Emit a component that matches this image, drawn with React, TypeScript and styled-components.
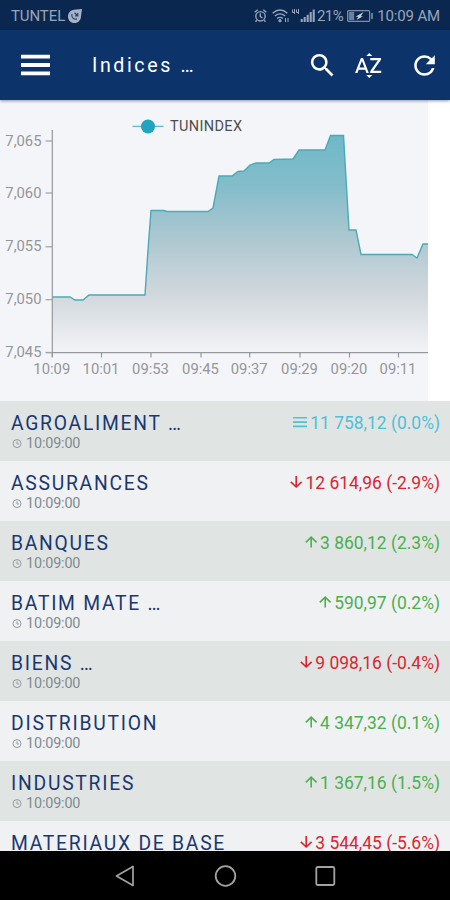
import React from "react";
import styled, { createGlobalStyle } from "styled-components";
import { MdSearch, MdSortByAlpha, MdRefresh } from "react-icons/md";

const GlobalStyle = createGlobalStyle`
  * { box-sizing: border-box; }
  body { margin: 0; background: #fff; font-family: Roboto, "Noto Sans", sans-serif; }
  svg { display: block; flex: none; }
`;

const Screen = styled.div`
  width: 450px;
  height: 900px;
  display: flex;
  flex-direction: column;
  overflow: hidden;
  background: #fff;
`;

const StatusBar = styled.div`
  height: 30px;
  flex: none;
  display: flex;
  align-items: center;
  justify-content: space-between;
  padding: 2px 10px 0 11px;
  background: #0a284f;
  color: #98a4bb;
  font-size: 15px;
  line-height: 20px;
`;

const StatusGroup = styled.div`
  display: flex;
  align-items: center;
`;

const Carrier = styled.span`
  letter-spacing: -0.1px;
  margin-right: 2px;
`;

const Percent = styled.span`
  margin: 0 4px 0 1px;
  letter-spacing: -0.5px;
`;

const Clock = styled.span`
  margin-left: 4px;
  letter-spacing: -0.15px;
`;

const AppBar = styled.header`
  height: 70px;
  flex: none;
  display: flex;
  align-items: center;
  padding: 0 10px 0 21px;
  background: #0d346a;
  color: #fff;
  box-shadow: 0 1px 3px rgba(10, 30, 70, 0.45);
  z-index: 1;
`;

const Title = styled.h1`
  flex: 1;
  margin: 1px 0 0 42px;
  font-size: 19.6px;
  line-height: 24px;
  font-weight: 400;
  letter-spacing: 2.6px;
  white-space: nowrap;
`;

const Action = styled.button<{ $gap: number }>`
  display: flex;
  padding: 0;
  margin: 0 0 0 ${(p) => p.$gap}px;
  border: 0;
  background: none;
  color: #fff;
`;

const ChartPanel = styled.section`
  width: 428px;
  height: 301px;
  flex: none;
  background: #f4f5f8;
`;

const ChartText = styled.text<{ $legend?: boolean }>`
  font-family: Roboto, sans-serif;
  font-size: ${(p) => (p.$legend ? 14.5 : 14.8)}px;
  fill: ${(p) => (p.$legend ? "#4c4d50" : "#94969a")};
`;

const List = styled.ul`
  flex: 1;
  min-height: 0;
  overflow: hidden;
  margin: 0;
  padding: 0;
  list-style: none;
`;

const Row = styled.li`
  height: 60px;
  display: flex;
  justify-content: space-between;
  align-items: flex-start;
  padding: 10px 10px 0 11px;
  background: #eff1f3;
  &:nth-child(odd) { background: #e0e5e4; }
`;

const Name = styled.div`
  padding-top: 1px;
  font-size: 19.3px;
  line-height: 23px;
  letter-spacing: 1.75px;
  color: #1b3770;
  white-space: pre;
`;

const Time = styled.div`
  display: flex;
  align-items: center;
  gap: 4px;
  padding-left: 1px;
  font-size: 14.4px;
  line-height: 17px;
  letter-spacing: -0.15px;
  color: #7f8a90;
`;

type Trend = "flat" | "up" | "down";
const trendColor: Record<Trend, string> = { flat: "#4fc0d6", up: "#4caf50", down: "#dc2430" };

const Quote = styled.div<{ $trend: Trend }>`
  display: flex;
  align-items: center;
  gap: 2px;
  padding-top: 1px;
  font-size: 17.45px;
  line-height: 22px;
  white-space: nowrap;
  color: ${(p) => trendColor[p.$trend]};
`;

const NavBar = styled.nav`
  height: 49px;
  flex: none;
  display: grid;
  grid-template-columns: repeat(3, 100px);
  justify-content: center;
  justify-items: center;
  align-items: center;
  background: #000;
`;

const line =
  "52,197 70,197 75,200 83,200 89,195 145,195 148,150 151,110.5 164,110.5 167,111.5 208,111.5 213,108 219,76 232,76 238,71.5 244,71 250,65 256,63 269,63 274,59.5 293,59 299,50 325,50 330.5,35.5 343.5,35.5 349,130 356,130 361,154.5 412,154.5 417,158 423,144 428,144";

const yTicks: [string, number][] = [
  ["7,065", 41], ["7,060", 93], ["7,055", 146.8], ["7,050", 199.7], ["7,045", 252.5],
];
const xTicks: [string, number][] = [
  ["10:09", 52.3], ["10:01", 101.5], ["09:53", 151], ["09:45", 201],
  ["09:37", 249.7], ["09:29", 300], ["09:20", 349.5], ["09:11", 398.5],
];

const rows: { name: string; value: string; trend: Trend }[] = [
  { name: "AGROALIMENT …", value: "11 758,12 (0.0%)", trend: "flat" },
  { name: "ASSURANCES", value: "12 614,96 (-2.9%)", trend: "down" },
  { name: "BANQUES", value: "3 860,12 (2.3%)", trend: "up" },
  { name: "BATIM MATE …", value: "590,97 (0.2%)", trend: "up" },
  { name: "BIENS …", value: "9 098,16 (-0.4%)", trend: "down" },
  { name: "DISTRIBUTION", value: "4 347,32 (0.1%)", trend: "up" },
  { name: "INDUSTRIES", value: "1 367,16 (1.5%)", trend: "up" },
  { name: "MATERIAUX DE BASE", value: "3 544,45 (-5.6%)", trend: "down" },
];

const TrendIcon = ({ trend }: { trend: Trend }) =>
  trend === "flat" ? (
    <svg width="15" height="14" viewBox="0 0 15 14" stroke="currentColor" strokeWidth="1.6">
      <path d="M0 1.8H14M0 6.1H14M0 10.4H14" />
    </svg>
  ) : (
    <svg width="13" height="14" viewBox="0 0 13 14" fill="none" stroke="currentColor" strokeWidth="1.6">
      <path d={trend === "down" ? "M6.2 0V10.5M.8 5.8L6.2 11L11.6 5.8" : "M6.2 11.5V1.3M.8 6.4L6.2 1.2L11.6 6.4"} />
    </svg>
  );

const IndexChart = () => (
  <svg width="428" height="301" viewBox="0 0 428 301">
    <defs>
      <linearGradient id="area" gradientUnits="userSpaceOnUse" x1="0" y1="35" x2="0" y2="252">
        <stop offset="0" stopColor="#6db9c9" />
        <stop offset="0.25" stopColor="#86bdca" />
        <stop offset="0.5" stopColor="#b0c9d1" />
        <stop offset="0.75" stopColor="#d3d9de" />
        <stop offset="1" stopColor="#f2f3f6" />
      </linearGradient>
    </defs>
    <polygon points={`${line} 428,252 52,252`} fill="url(#area)" />
    <polyline points={line} fill="none" stroke="#4ba9b8" strokeWidth="1.4" />
    <path d="M52.3 30V257M46 252.6H428" stroke="#96989e" strokeWidth="1.2" fill="none" />
    {yTicks.map(([label, y]) => (
      <g key={label}>
        <path d={`M45.5 ${y}H52`} stroke="#a0a2a8" strokeWidth="1.2" />
        <ChartText x="41.5" y={y + 4.6} textAnchor="end">{label}</ChartText>
      </g>
    ))}
    {xTicks.map(([label, x]) => (
      <g key={label}>
        <path d={`M${x} 252.5V257.5`} stroke="#96989e" strokeWidth="1.2" />
        <ChartText x={x - 0.5} y="273.8" textAnchor="middle">{label}</ChartText>
      </g>
    ))}
    <path d="M132.5 26.4H163.5" stroke="#63bccb" strokeWidth="1.4" />
    <circle cx="148" cy="26.5" r="7" fill="#1fa5bf" />
    <ChartText $legend x="170" y="31.2" textLength="72">TUNINDEX</ChartText>
  </svg>
);

const StatusIcons = () => (
  <svg width="62" height="18" viewBox="253 7 62 18" fill="none" stroke="#98a4bb" strokeWidth="1.4">
    <circle cx="259.5" cy="16.3" r="4.7" />
    <path d="M259.3 13.3V16.7L261.5 18M253.7 12.3L256.7 9.8M262.3 9.8L265.3 12.3M255.8 20.3L254.5 21.8M263.2 20.3L264.5 21.8" />
    <path d="M271.6 13.2Q279 6.8 286.4 13.2M273.8 16Q279 11.7 284.2 16M276 18.5Q279 16.3 282 18.5" />
    <circle cx="279" cy="20.7" r=".9" fill="#98a4bb" />
    <path d="M284.5 18V22M287 18V22" strokeWidth="1" />
    <path d="M291.5 9.5V12.5H294M293.5 9V14M295.5 9.5V12.5H298M297.5 9V14" strokeWidth="1" />
    <path d="M300.7 19V22M303.7 17V22M306.7 14.7V22M309.7 12V22M312.7 9.5V22" strokeWidth="2.1" />
  </svg>
);

export default function App() {
  return (
    <>
      <GlobalStyle />
      <Screen>
        <StatusBar>
          <StatusGroup>
            <Carrier>TUNTEL</Carrier>
            <svg width="16" height="16" viewBox="0 0 16 16">
              <path d="M15 1L9 1.5C4 1.6 1 4.6 1 8.4C1 12 3.8 15 7.4 15C11.2 15 14 12 14 8.2Z" fill="#a7b2c6" />
              <path d="M5 6C4 9 6.2 11.8 10 10.9M7.5 4.8L10.8 7.8M10.8 5V7.8H8" fill="none" stroke="#29446b" strokeWidth="1.2" />
            </svg>
          </StatusGroup>
          <StatusGroup>
            <StatusIcons />
            <Percent>21%</Percent>
            <svg width="26" height="12" viewBox="0 0 26 12" fill="none" stroke="#7f8fa9">
              <rect x=".6" y=".6" width="22" height="10.8" rx="1" strokeWidth="1.2" />
              <path d="M25 3V9" strokeWidth="1.6" />
              <rect x="1.8" y="1.8" width="5.4" height="8.4" fill="#6c7f9d" stroke="none" />
              <path d="M16.5 2L8.5 6.7H11.2L9.5 10L16 6.2H13.8Z" fill="#c3ccda" stroke="none" />
            </svg>
            <Clock>10:09 AM</Clock>
          </StatusGroup>
        </StatusBar>
        <AppBar>
          <Action $gap={0} aria-label="Menu">
            <svg width="29" height="22" viewBox="0 0 29 22" fill="#fff">
              <path d="M0 .7H29V4.5H0zM0 9.1H29V12.9H0zM0 17.5H29V21.3H0z" />
            </svg>
          </Action>
          <Title>Indices …</Title>
          <Action $gap={0} aria-label="Search"><MdSearch size={31} /></Action>
          <Action $gap={15} aria-label="Sort"><MdSortByAlpha size={31} /></Action>
          <Action $gap={25} aria-label="Refresh"><MdRefresh size={31} /></Action>
        </AppBar>
        <ChartPanel><IndexChart /></ChartPanel>
        <List>
          {rows.map((r) => (
            <Row key={r.name}>
              <div>
                <Name>{r.name}</Name>
                <Time>
                  <svg width="10" height="10" viewBox="0 0 10 10" fill="none" stroke="#929c9f" strokeWidth="1">
                    <circle cx="5" cy="4.6" r="4" />
                    <path d="M5 2.3V5H7" />
                  </svg>
                  10:09:00
                </Time>
              </div>
              <Quote $trend={r.trend}>
                <TrendIcon trend={r.trend} />
                {r.value}
              </Quote>
            </Row>
          ))}
        </List>
        <NavBar>
          <svg width="22" height="24" viewBox="0 0 22 24" fill="none" stroke="#a3a3a3" strokeWidth="1.7" strokeLinejoin="round">
            <path d="M2.5 12L19 2.5V21.5Z" />
          </svg>
          <svg width="24" height="24" viewBox="0 0 24 24" fill="none" stroke="#a3a3a3" strokeWidth="1.8">
            <circle cx="12.5" cy="12" r="9.8" />
          </svg>
          <svg width="24" height="24" viewBox="0 0 24 24" fill="none" stroke="#a3a3a3" strokeWidth="1.8">
            <rect x="3.3" y="3" width="18" height="18" rx="1.5" />
          </svg>
        </NavBar>
      </Screen>
    </>
  );
}
